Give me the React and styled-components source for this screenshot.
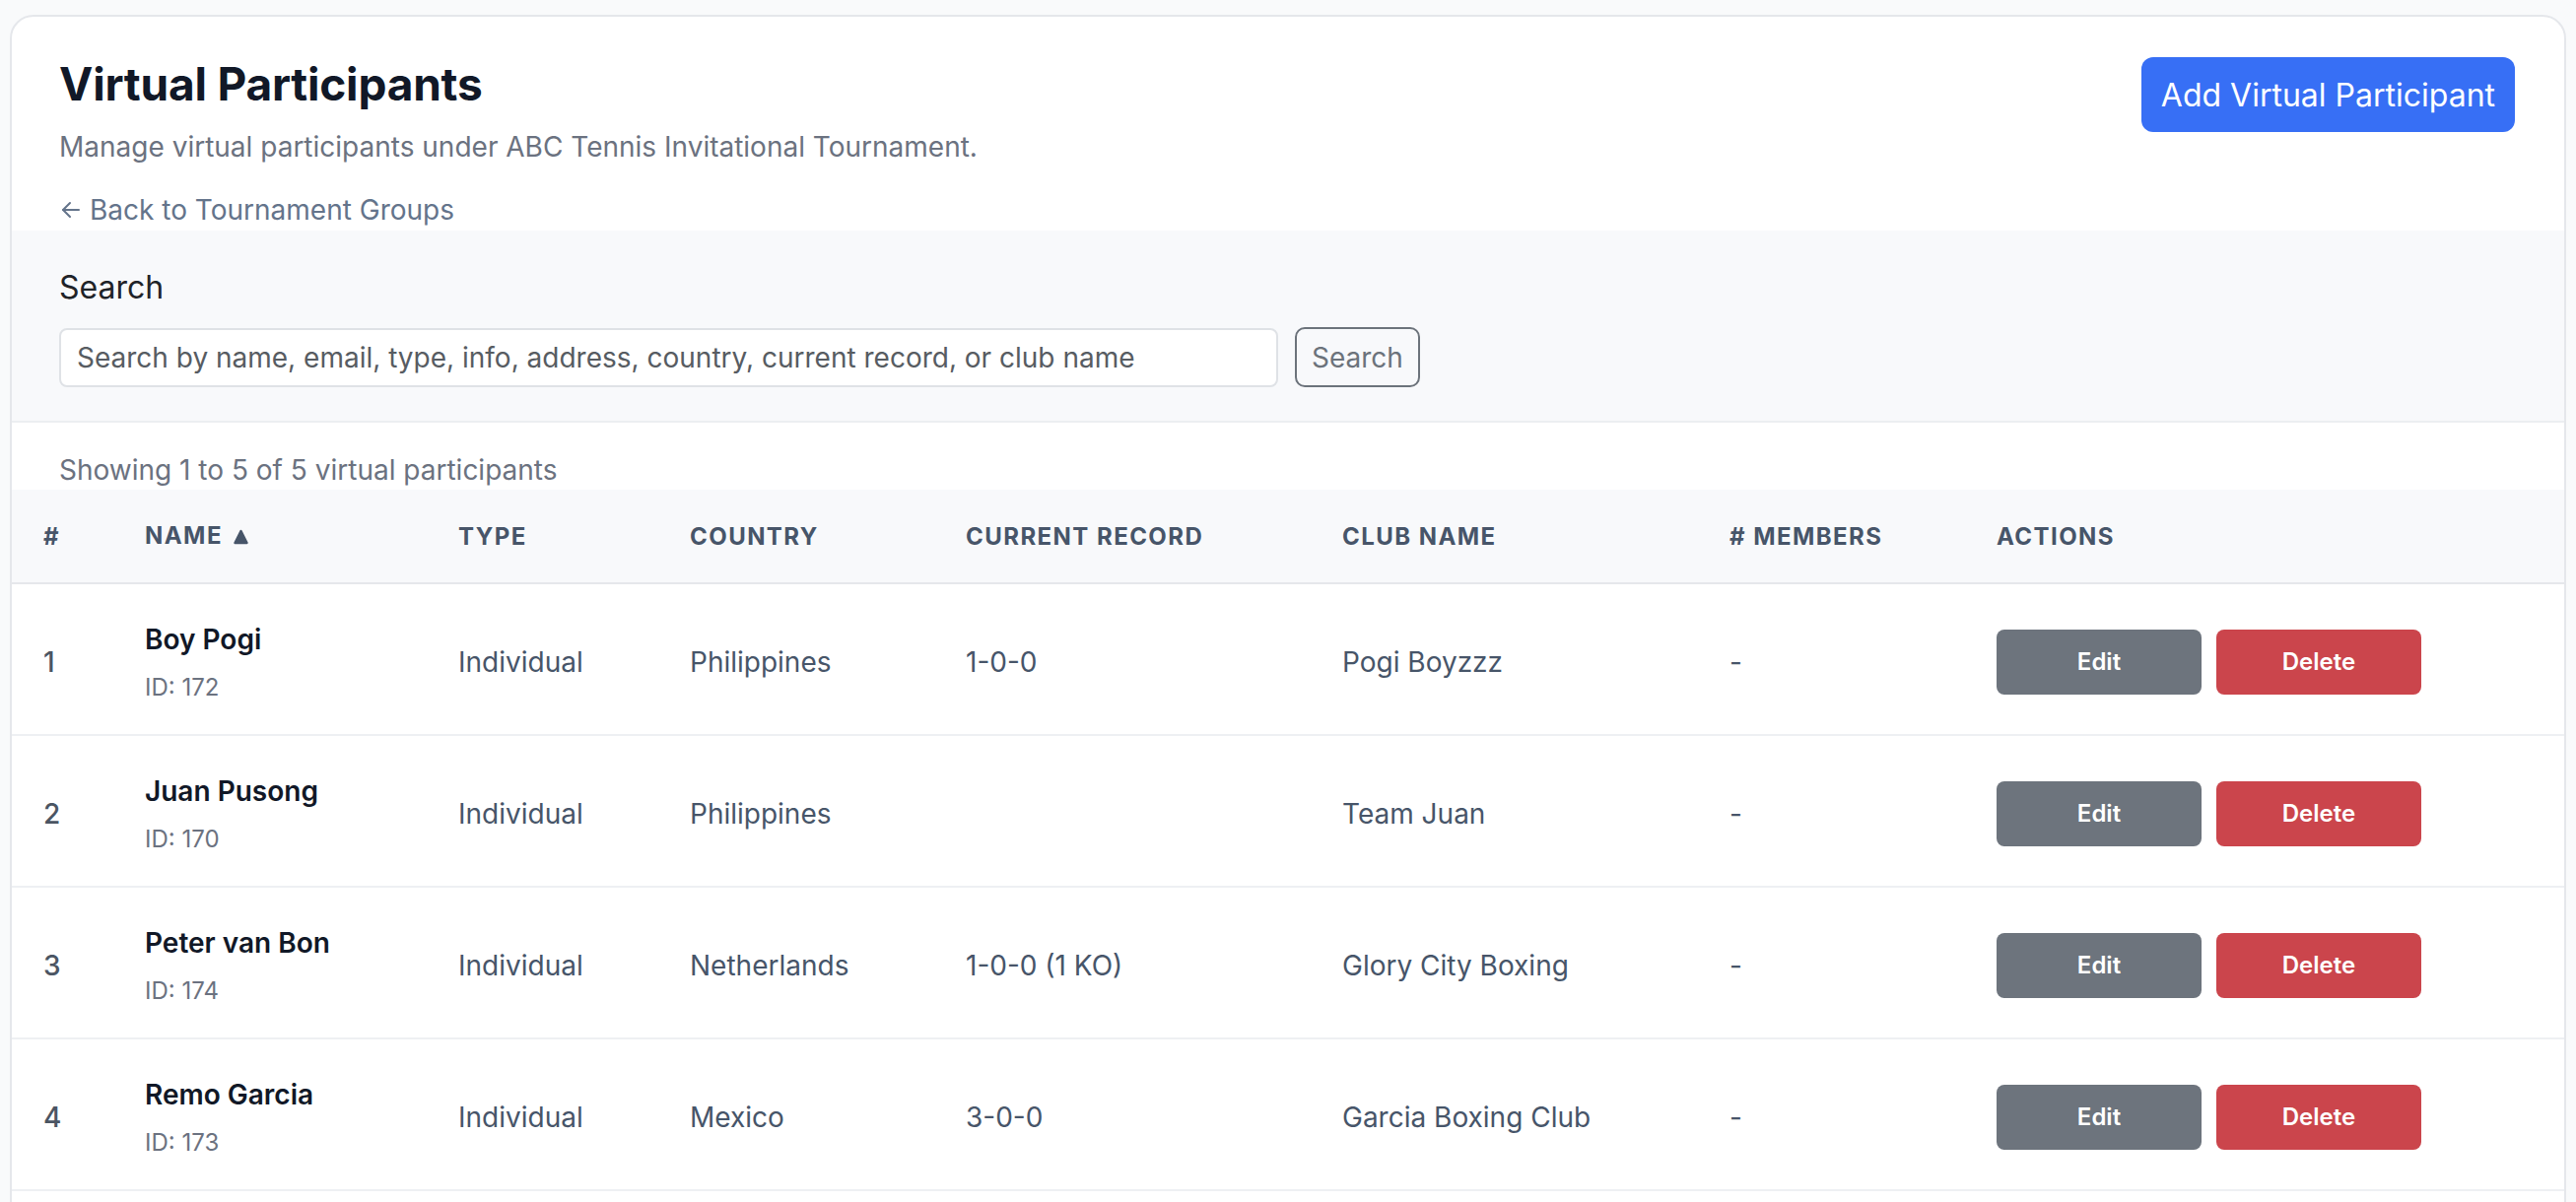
import React from 'react'
import styled, { createGlobalStyle } from 'styled-components'

const GlobalStyle = createGlobalStyle`
  * { box-sizing: border-box; }
  body {
    margin: 0;
    background: #f9fafb;
    font-family: Inter, "Noto Sans", "Liberation Sans", sans-serif;
  }
`

const participants = [
  { id: 172, name: 'Boy Pogi', type: 'Individual', country: 'Philippines', record: '1-0-0', club: 'Pogi Boyzzz', members: '-' },
  { id: 170, name: 'Juan Pusong', type: 'Individual', country: 'Philippines', record: '', club: 'Team Juan', members: '-' },
  { id: 174, name: 'Peter van Bon', type: 'Individual', country: 'Netherlands', record: '1-0-0 (1 KO)', club: 'Glory City Boxing', members: '-' },
  { id: 173, name: 'Remo Garcia', type: 'Individual', country: 'Mexico', record: '3-0-0', club: 'Garcia Boxing Club', members: '-' },
  { id: 171, name: 'Rico Santos', type: 'Individual', country: 'Philippines', record: '2-1-0', club: 'Santos Fight Team', members: '-' },
]

const columns = [
  { label: '#', width: 103 },
  { label: 'Name', width: 318, sorted: true },
  { label: 'Type', width: 235 },
  { label: 'Country', width: 280 },
  { label: 'Current Record', width: 382 },
  { label: 'Club Name', width: 393 },
  { label: '# Members', width: 271 },
  { label: 'Actions' },
]

const SortUp = () => (
  <svg width="15" height="16" viewBox="0 0 15 16">
    <path d="M7.5 2 L13.5 14 H1.5 Z" fill="#475569" stroke="#475569" strokeWidth="2.4" strokeLinejoin="round" />
  </svg>
)

const ArrowLeft = () => (
  <svg width="24" height="24" viewBox="0 0 24 24" fill="none" stroke="currentColor" strokeWidth="2" strokeLinecap="round" strokeLinejoin="round">
    <path d="M20 12H4" />
    <path d="m11 19-7-7 7-7" />
  </svg>
)

export default function App() {
  return (
    <Page>
      <GlobalStyle />
      <Card>
        <Header>
          <div>
            <Title>Virtual Participants</Title>
            <Subtitle>Manage virtual participants under ABC Tennis Invitational Tournament.</Subtitle>
            <BackLink href="#">
              <ArrowLeft />
              Back to Tournament Groups
            </BackLink>
          </div>
          <PrimaryButton>Add Virtual Participant</PrimaryButton>
        </Header>

        <SearchPanel>
          <Label>Search</Label>
          <SearchRow>
            <SearchInput placeholder="Search by name, email, type, info, address, country, current record, or club name" />
            <OutlineButton>Search</OutlineButton>
          </SearchRow>
        </SearchPanel>

        <Summary>Showing 1 to 5 of 5 virtual participants</Summary>

        <Table>
          <colgroup>
            {columns.map((c, i) => (
              <col key={i} style={c.width ? { width: c.width } : undefined} />
            ))}
          </colgroup>
          <thead>
            <tr>
              {columns.map((c, i) => (
                <Th key={i}>
                  {c.label}
                  {c.sorted && <SortIcon><SortUp /></SortIcon>}
                </Th>
              ))}
            </tr>
          </thead>
          <tbody>
            {participants.map((p, i) => (
              <Row key={p.id}>
                <Td $num>{i + 1}</Td>
                <Td>
                  <Name>{p.name}</Name>
                  <SubId>ID: {p.id}</SubId>
                </Td>
                <Td>{p.type}</Td>
                <Td>{p.country}</Td>
                <Td>{p.record}</Td>
                <Td>{p.club}</Td>
                <Td>{p.members}</Td>
                <Td>
                  <Actions>
                    <ActionButton $bg="#6d747d">Edit</ActionButton>
                    <ActionButton $bg="#cb454c">Delete</ActionButton>
                  </Actions>
                </Td>
              </Row>
            ))}
          </tbody>
        </Table>
      </Card>
    </Page>
  )
}

const Page = styled.div`
  padding: 15px 10px 0 10px;
`

const Card = styled.div`
  background: #ffffff;
  border: 2px solid #e5e7eb;
  border-radius: 24px;
  overflow: hidden;
`

const Header = styled.div`
  display: flex;
  justify-content: space-between;
  align-items: flex-start;
  padding: 40px 50px 1px 48px;
`

const Title = styled.h1`
  margin: 0;
  font-size: 46px;
  line-height: 56px;
  font-weight: 700;
  letter-spacing: -0.2px;
  color: #111827;
`

const Subtitle = styled.p`
  margin: 16px 0 0;
  font-size: 28px;
  line-height: 40px;
  color: #6b7280;
`

const BackLink = styled.a`
  margin-top: 24px;
  display: inline-flex;
  align-items: center;
  gap: 7px;
  font-size: 28px;
  line-height: 40px;
  color: #64748b;
  text-decoration: none;
`

const PrimaryButton = styled.button`
  height: 76px;
  padding: 0 20px;
  margin-top: 1px;
  border: none;
  border-radius: 12px;
  background: #376ff5;
  color: #ffffff;
  font-family: inherit;
  font-size: 32px;
  font-weight: 400;
  white-space: nowrap;
`

const SearchPanel = styled.div`
  background: #f8f9fb;
  border-bottom: 2px solid #eceef1;
  padding: 34px 48px 34px;
`

const Label = styled.div`
  font-size: 32px;
  line-height: 48px;
  color: #1f2328;
  margin-bottom: 16px;
`

const SearchRow = styled.div`
  display: flex;
  align-items: center;
  gap: 17px;
`

const SearchInput = styled.input`
  width: 1237px;
  height: 60px;
  padding: 0 16px;
  border: 2px solid #dfe2e6;
  border-radius: 8px;
  background: #ffffff;
  font-family: inherit;
  font-size: 28px;
  color: #212529;
  &::placeholder {
    color: #575c62;
  }
`

const OutlineButton = styled.button`
  height: 61px;
  padding: 0 15px;
  border: 2px solid #6c737b;
  border-radius: 10px;
  background: transparent;
  color: #6c737b;
  font-family: inherit;
  font-size: 28px;
`

const Summary = styled.div`
  padding: 28px 48px 0;
  font-size: 28px;
  line-height: 40px;
  color: #6b7280;
`

const Table = styled.table`
  width: 100%;
  table-layout: fixed;
  border-collapse: collapse;
`

const Th = styled.th`
  background: #f8f9fb;
  border-bottom: 2px solid #e5e7eb;
  padding: 31px 0 30px 32px;
  text-align: left;
  font-size: 24px;
  line-height: 32px;
  font-weight: 700;
  letter-spacing: 0.06em;
  text-transform: uppercase;
  color: #475569;
  white-space: nowrap;
`

const SortIcon = styled.span`
  display: inline-block;
  margin-left: 11px;
  vertical-align: -1px;
`

const Row = styled.tr`
  border-bottom: 2px solid #eef0f3;
`

const Td = styled.td`
  padding: 36px 0 31px 32px;
  vertical-align: middle;
  font-size: 28px;
  line-height: 40px;
  color: ${p => (p.$num ? '#4b5563' : '#475569')};
  font-weight: ${p => (p.$num ? 500 : 400)};
`

const Name = styled.div`
  font-size: 28px;
  line-height: 40px;
  font-weight: 600;
  color: #111827;
`

const SubId = styled.div`
  margin-top: 13px;
  font-size: 24px;
  line-height: 32px;
  color: #6b7280;
`

const Actions = styled.div`
  display: flex;
  gap: 15px;
`

const ActionButton = styled.button`
  width: 208px;
  height: 66px;
  border: none;
  border-radius: 8px;
  background: ${p => p.$bg};
  color: #ffffff;
  font-family: inherit;
  font-size: 24px;
  font-weight: 600;
`
